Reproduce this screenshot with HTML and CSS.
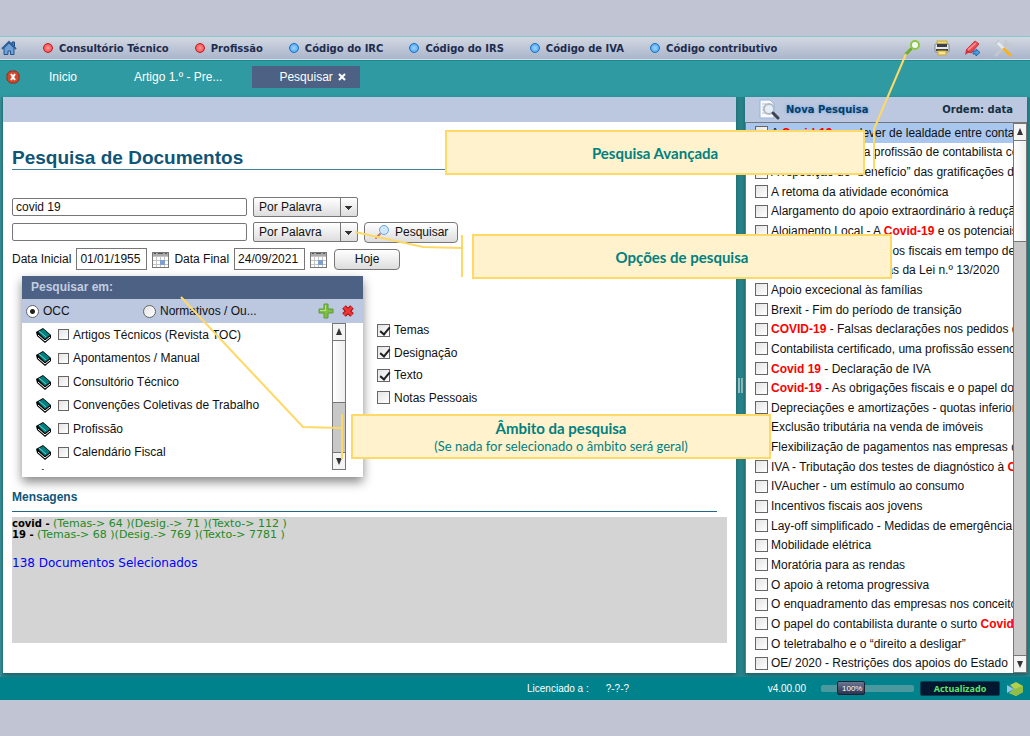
FILE: index.html
```html
<!DOCTYPE html>
<html lang="pt">
<head>
  <meta charset="UTF-8">
  <meta name="viewport" content="width=device-width, initial-scale=1.0">
  <title>Pesquisa de Documentos</title>
  <link rel="stylesheet" href="styles.css">
</head>
<body>

  <!-- Símbolos reutilizados -->
  <svg class="symbols" aria-hidden="true">
    <symbol id="book" viewBox="0 0 16 16">
      <path d="M0 5 L7 1 L15 8 V11 L9 16 L1 9 Z" fill="#000"/>
      <path d="M2 5 L7 2 L14 8 L9 12 Z" fill="#008080"/>
      <path d="M2 8 L9 14 L14 10" fill="none" stroke="#fff"/>
      <path d="M3 4 L10 10" stroke="#7cc" fill="none"/>
    </symbol>
    <symbol id="calendar" viewBox="0 0 17 17">
      <rect x="0.5" y="1.5" width="16" height="15" fill="#fff" stroke="#777"/>
      <rect x="1" y="2" width="15" height="3" fill="#aaa"/>
      <path d="M2 2.500h2M6 2.500h5M13 2.500h2" stroke="#555"/>
      <path d="M1 5.500h15M1 9.500h15M1 13.500h15M4.500 5v11M8.500 5v11M12.500 5v11" stroke="#c4c4c4"/>
      <rect x="8" y="9" width="5" height="5" fill="#7f9fcf"/>
    </symbol>
    <symbol id="up" viewBox="0 0 14 16"><path d="M7 4 L10 11 H4 Z" fill="#333"/></symbol>
    <symbol id="down" viewBox="0 0 14 16"><path d="M7 12 L10 5 H4 Z" fill="#333"/></symbol>
  </svg>

  <div class="app">

    <!-- Menu principal -->
    <nav class="menu">
      <a class="home" href="#" aria-label="Início">
        <svg width="16" height="16" viewBox="0 0 16 16">
          <path d="M11 2h2.500v5H11z" fill="#4d7fb8" stroke="#1f4b80"/>
          <path d="M3 8 L8 3 L13 8 V14.500 H9.500 V11 H7 V14.500 H3 Z" fill="#6ea0d6" stroke="#24548c"/>
          <path d="M1 9 L8 2 L15 9" fill="none" stroke="#2f609c" stroke-width="2"/>
        </svg>
      </a>
      <a class="menu-link red" href="#">Consultório Técnico</a>
      <a class="menu-link red" href="#">Profissão</a>
      <a class="menu-link blue" href="#">Código do IRC</a>
      <a class="menu-link blue" href="#">Código do IRS</a>
      <a class="menu-link blue" href="#">Código de IVA</a>
      <a class="menu-link blue" href="#">Código contributivo</a>
      <div class="tools">
        <button class="icon-button" aria-label="Pesquisa avançada">
          <svg width="18" height="18" viewBox="0 0 18 18">
            <path d="M3 15 L8 10" stroke="#6fae2c" stroke-width="3" stroke-linecap="round"/>
            <circle cx="12" cy="6" r="4" fill="#f4fbf4" stroke="#8cc63f" stroke-width="2"/>
          </svg>
        </button>
        <button class="icon-button" aria-label="Imprimir">
          <svg width="18" height="18" viewBox="0 0 18 18">
            <rect x="4" y="2" width="10" height="4" fill="#f2d860" stroke="#c9a83a"/>
            <rect x="2" y="5" width="14" height="8" rx="1" fill="#e4e7eb" stroke="#83888f"/>
            <rect x="4" y="5" width="10" height="3" fill="#3c4046"/>
            <path d="M3 11h12" stroke="#444" stroke-width="2"/>
            <rect x="5" y="12" width="8" height="4" fill="#fae487" stroke="#c9a83a"/>
          </svg>
        </button>
        <button class="icon-button" aria-label="Marcador">
          <svg width="18" height="18" viewBox="0 0 18 18">
            <path d="M3 11 L12 2 L16 5 L8 14 Z" fill="#e9454b" stroke="#c9353d"/>
            <path d="M5 11 L13 4" stroke="#f58a8d" stroke-width="2"/>
            <path d="M3 11 L2 16 L5 14 L8 14 Z" fill="#d22f38"/>
            <path d="M10 12h3V10l4 3.500-4 3.500V15h-3z" fill="#4b9be0" stroke="#2767a8"/>
          </svg>
        </button>
        <button class="icon-button" aria-label="Ferramentas">
          <svg width="20" height="18" viewBox="0 0 20 18">
            <path d="M3 16 L14 5" stroke="#c3c8ce" stroke-width="3" stroke-linecap="round"/>
            <path d="M13 1 L12 5 L15 7 L18 5" fill="none" stroke="#c3c8ce" stroke-width="2"/>
            <path d="M4 3 L11 10" stroke="#e6e8eb" stroke-width="3" stroke-linecap="round"/>
            <path d="M2 5 L6 1" stroke="#c3c8ce" stroke-width="2"/>
            <path d="M11 10 L17 16" stroke="#f5b41d" stroke-width="3" stroke-linecap="round"/>
          </svg>
        </button>
      </div>
    </nav>

    <!-- Separadores abertos -->
    <div class="tabs">
      <button class="close-all" aria-label="Fechar todos">
        <svg width="14" height="14" viewBox="0 0 14 14">
          <path d="M4 1h6l3 3v6l-3 3H4l-3-3V4z" fill="#cf4a2c" stroke="#8f2f20"/>
          <path d="M5 4 L9 10 M9 4 L5 10" stroke="#fff" stroke-width="2"/>
        </svg>
      </button>
      <button class="tab">Inicio</button>
      <button class="tab">Artigo 1.º - Pre...</button>
      <button class="tab active">Pesquisar
        <svg width="8" height="8" viewBox="0 0 8 8"><path d="M1 1 L7 7 M7 1 L1 7" stroke="#fff" stroke-width="2"/></svg>
      </button>
    </div>

    <div class="workspace">

      <!-- Painel de pesquisa -->
      <main class="search">
        <div class="panel-head"></div>
        <div class="search-body">
          <h1>Pesquisa de Documentos</h1>

          <form class="query">
            <div class="row">
              <input class="term" type="text" value="covid 19" aria-label="Primeiro termo">
              <select class="mode" aria-label="Modo do primeiro termo"><option>Por Palavra</option></select>
            </div>
            <div class="row">
              <input class="term" type="text" aria-label="Segundo termo">
              <select class="mode" aria-label="Modo do segundo termo"><option>Por Palavra</option></select>
              <button class="push find" type="button">
                <svg width="16" height="16" viewBox="0 0 16 16">
                  <path d="M2 14 L6 10" stroke="#c9775b" stroke-width="2" stroke-linecap="round"/>
                  <circle cx="10" cy="6" r="4.500" fill="#cfe8fb" stroke="#6fa5dc"/>
                </svg>
                Pesquisar
              </button>
            </div>
            <div class="row dates">
              <label for="from">Data Inicial</label>
              <input class="date" id="from" type="text" value="01/01/1955">
              <button class="icon-button" type="button" aria-label="Escolher data inicial"><svg width="17" height="17"><use href="#calendar"/></svg></button>
              <label for="to">Data Final</label>
              <input class="date" id="to" type="text" value="24/09/2021">
              <button class="icon-button" type="button" aria-label="Escolher data final"><svg width="17" height="17"><use href="#calendar"/></svg></button>
              <button class="push today" type="button">Hoje</button>
            </div>
          </form>

          <div class="filters">
            <section class="scope">
              <h2>Pesquisar em:</h2>
              <div class="scope-kind">
                <label class="occ"><input type="radio" name="kind" checked>OCC</label>
                <label class="norm"><input type="radio" name="kind">Normativos / Ou...</label>
                <button class="icon-button" aria-label="Adicionar">
                  <svg width="16" height="16" viewBox="0 0 16 16"><path d="M6 1h4v5h5v4h-5v5H6v-5H1V6h5z" fill="#7fbf42" stroke="#5f9a38"/><path d="M7.500 2v5M2 7.500h6" stroke="#b9e08c"/></svg>
                </button>
                <button class="icon-button" aria-label="Limpar">
                  <svg width="14" height="16" viewBox="0 0 14 16"><path d="M3 4 L11 12 M11 4 L3 12" stroke="#a01212" stroke-width="5"/><path d="M3 4 L11 12 M11 4 L3 12" stroke="#ee3535" stroke-width="3"/></svg>
                </button>
              </div>
              <div class="scope-list">
                <ul>
                  <li><svg width="16" height="16"><use href="#book"/></svg><label><input type="checkbox">Artigos Técnicos (Revista TOC)</label></li>
                  <li><svg width="16" height="16"><use href="#book"/></svg><label><input type="checkbox">Apontamentos / Manual</label></li>
                  <li><svg width="16" height="16"><use href="#book"/></svg><label><input type="checkbox">Consultório Técnico</label></li>
                  <li><svg width="16" height="16"><use href="#book"/></svg><label><input type="checkbox">Convenções Coletivas de Trabalho</label></li>
                  <li><svg width="16" height="16"><use href="#book"/></svg><label><input type="checkbox">Profissão</label></li>
                  <li><svg width="16" height="16"><use href="#book"/></svg><label><input type="checkbox">Calendário Fiscal</label></li>
                  <li class="next"><svg width="16" height="16"><use href="#book"/></svg></li>
                </ul>
                <div class="scrollbar">
                  <button aria-label="Subir"><svg width="14" height="16"><use href="#up"/></svg></button>
                  <div class="thumb scope-thumb"></div>
                  <div class="track"></div>
                  <button aria-label="Descer"><svg width="14" height="16"><use href="#down"/></svg></button>
                </div>
              </div>
            </section>

            <div class="fields">
              <label><input type="checkbox" checked>Temas</label>
              <label><input type="checkbox" checked>Designação</label>
              <label><input type="checkbox" checked>Texto</label>
              <label><input type="checkbox">Notas Pessoais</label>
            </div>
          </div>

          <h3>Mensagens</h3>
          <div class="messages">
            <p><b>covid - </b>(Temas-&gt; 64 )(Desig.-&gt; 71 )(Texto-&gt; 112 )</p>
            <p><b>19 - </b>(Temas-&gt; 68 )(Desig.-&gt; 769 )(Texto-&gt; 7781 )</p>
            <p class="total">138 Documentos Selecionados</p>
          </div>
        </div>
      </main>

      <div class="splitter"><span class="grip"></span></div>

      <!-- Resultados -->
      <aside class="results">
        <div class="panel-head">
          <svg width="24" height="24" viewBox="0 0 24 24">
            <path d="M3 2h10l4 4v14H3z" fill="#f8fafc" stroke="#8fb8e6"/>
            <path d="M5 6h5M5 9h3M5 12h3M5 15h4" stroke="#b9c0c8"/>
            <circle cx="12" cy="11" r="5" fill="#e4eef7" stroke="#b3bac3" stroke-width="2"/>
            <path d="M16 15 L21 20" stroke="#3d4350" stroke-width="3" stroke-linecap="round"/>
          </svg>
          <a class="new" href="#">Nova Pesquisa</a>
          <a class="order" href="#">Ordem: data</a>
        </div>
        <div class="results-list">
          <ul>
            <li class="selected"><label><input type="checkbox"><span>A <b>Covid-19</b> e o dever de lealdade entre contabil</span></label></li>
            <li><label><input type="checkbox"><span>A regularização da profissão de contabilista ce</span></label></li>
            <li><label><input type="checkbox"><span>A reposição do “benefício” das gratificações de</span></label></li>
            <li><label><input type="checkbox"><span>A retoma da atividade económica</span></label></li>
            <li><label><input type="checkbox"><span>Alargamento do apoio extraordinário à redução</span></label></li>
            <li><label><input type="checkbox"><span>Alojamento Local - A <b>Covid-19</b> e os potenciais i</span></label></li>
            <li><label><input type="checkbox"><span>Alterações: os benefícios fiscais em tempo de</span></label></li>
            <li><label><input type="checkbox"><span>Alterações nas medidas da Lei n.º 13/2020</span></label></li>
            <li><label><input type="checkbox"><span>Apoio excecional às famílias</span></label></li>
            <li><label><input type="checkbox"><span>Brexit - Fim do período de transição</span></label></li>
            <li><label><input type="checkbox"><span><b>COVID-19</b> - Falsas declarações nos pedidos de</span></label></li>
            <li><label><input type="checkbox"><span>Contabilista certificado, uma profissão essenci</span></label></li>
            <li><label><input type="checkbox"><span><b>Covid 19</b> - Declaração de IVA</span></label></li>
            <li><label><input type="checkbox"><span><b>Covid-19</b> - As obrigações fiscais e o papel do c</span></label></li>
            <li><label><input type="checkbox"><span>Depreciações e amortizações - quotas inferiore</span></label></li>
            <li><label><input type="checkbox"><span>Exclusão tributária na venda de imóveis</span></label></li>
            <li><label><input type="checkbox"><span>Flexibilização de pagamentos nas empresas d</span></label></li>
            <li><label><input type="checkbox"><span>IVA - Tributação dos testes de diagnóstico à <b>Co</b></span></label></li>
            <li><label><input type="checkbox"><span>IVAucher - um estímulo ao consumo</span></label></li>
            <li><label><input type="checkbox"><span>Incentivos fiscais aos jovens</span></label></li>
            <li><label><input type="checkbox"><span>Lay-off simplificado - Medidas de emergência</span></label></li>
            <li><label><input type="checkbox"><span>Mobilidade elétrica</span></label></li>
            <li><label><input type="checkbox"><span>Moratória para as rendas</span></label></li>
            <li><label><input type="checkbox"><span>O apoio à retoma progressiva</span></label></li>
            <li><label><input type="checkbox"><span>O enquadramento das empresas nos conceito</span></label></li>
            <li><label><input type="checkbox"><span>O papel do contabilista durante o surto <b>Covid-1</b></span></label></li>
            <li><label><input type="checkbox"><span>O teletrabalho e o “direito a desligar”</span></label></li>
            <li><label><input type="checkbox"><span>OE/ 2020 - Restrições dos apoios do Estado</span></label></li>
          </ul>
          <div class="scrollbar">
            <button aria-label="Subir"><svg width="14" height="16"><use href="#up"/></svg></button>
            <div class="thumb results-thumb"></div>
            <div class="track"></div>
            <button aria-label="Descer"><svg width="14" height="16"><use href="#down"/></svg></button>
          </div>
        </div>
      </aside>
    </div>

    <!-- Barra de estado -->
    <footer class="status">
      <span>Licenciado a :</span>
      <span class="licence">?-?-?</span>
      <span class="version">v4.00.00</span>
      <div class="zoom">
        <input type="range" id="zoom" min="50" max="200" value="88" aria-label="Zoom">
        <label for="zoom">100%</label>
      </div>
      <button class="updated">Actualizado</button>
      <svg width="16" height="16" viewBox="0 0 16 16">
        <path d="M3 4 L9 1 L16 5 V11 L9 15 L2 12 L7 8 Z" fill="#b4cf48"/>
        <path d="M7 8 L16 5 V11 L9 15 L2 12 Z" fill="#8fbd45"/>
        <path d="M0 4 L7 8 L0 12 Z" fill="#8cc4ea"/>
      </svg>
    </footer>

    <!-- Anotações sobrepostas -->
    <svg class="leaders" width="1030" height="736" viewBox="0 0 1030 736" aria-hidden="true">
      <path d="M906 54 L874 129 V171"/>
      <path d="M355 232 L423 247 L462 248 M462 235 V277"/>
      <path d="M181 297 L303 427 L342 428 M342 414 V459"/>
    </svg>
    <div class="callout advanced"><strong>Pesquisa Avançada</strong></div>
    <div class="callout options"><strong>Opções de pesquisa</strong></div>
    <div class="callout ambit"><strong>Âmbito da pesquisa</strong><span>(Se nada for selecionado o âmbito será geral)</span></div>
  </div>

</body>
</html>
```
FILE: styles.css
```css
/* ====== BASE ====== */
* {
  box-sizing: border-box;
}
body {
  margin: 0;
  background: #c0c4d3;
  color: #111;
  font-family: "Liberation Sans", Arial, sans-serif;
  font-size: 12px;
}
h1, h2, h3, p, ul {
  margin: 0;
  padding: 0;
}
ul {
  list-style: none;
}
svg {
  display: block;
  flex: none;
}
.symbols {
  position: absolute;
  width: 0;
  height: 0;
}
button, input, select {
  font: inherit;
  color: inherit;
  margin: 0;
}
.icon-button, .close-all {
  display: block;
  border: 0;
  padding: 0;
  background: none;
}
.app {
  position: relative;
  display: flex;
  flex-direction: column;
  min-height: 100vh;
  padding: 36px 0;
  overflow: hidden;
}

/* ====== MENU ====== */
.menu {
  display: flex;
  align-items: center;
  gap: 26px;
  height: 24px;
  padding: 0 17px 0 1px;
  border-top: 1px solid #8cc6cd;
  border-bottom: 1px solid #d5d9e3;
  background: linear-gradient(#d3d8e2, #a9b5cb);
  font: bold 10px "DejaVu Sans", Verdana, sans-serif;
}
.menu-link {
  display: flex;
  align-items: center;
  gap: 6px;
  color: #1d2b4d;
  text-decoration: none;
  white-space: nowrap;
}
.menu-link::before {
  content: "";
  width: 8px;
  height: 8px;
  border-radius: 50%;
}
.red::before {
  border: 1px solid #c31d1d;
  background: radial-gradient(#ff9c9c, #ee3333);
}
.blue::before {
  border: 1px solid #1b6fc0;
  background: radial-gradient(#9fd6ff, #3c9cee);
}
.tools {
  display: flex;
  gap: 12px;
  margin-left: auto;
}

/* ====== SEPARADORES ====== */
.tabs {
  display: flex;
  align-items: center;
  height: 37px;
  padding: 0 6px 5px;
  border-top: 1px solid #178a92;
  background: #2f9aa2;
}
.tab {
  height: 22px;
  border: 0;
  padding: 0 30px 0 27px;
  background: none;
  color: #fff;
}
.close-all {
  margin-right: 2px;
}
.tab.active {
  display: flex;
  align-items: center;
  gap: 5px;
  padding-right: 14px;
  background: #4c6184;
}

/* ====== ÁREA DE TRABALHO ====== */
.workspace {
  display: flex;
  flex: 1;
  padding: 0 3px 4px;
  background: linear-gradient(90deg, #3c9298, #28838a 3px);
}
.panel-head {
  display: flex;
  align-items: center;
  height: 25px;
  background: #bcc7e0;
}
.search {
  flex: 1;
  min-width: 0;
  background: #fff;
  box-shadow: 0 2px 4px #1c6066;
}
.search-body {
  padding: 24px 9px 0;
}
h1 {
  margin-right: 10px;
  border-bottom: 1px solid #3f8194;
  color: #0f5578;
  font-size: 19px;
  line-height: 23px;
}
.query {
  display: flex;
  flex-direction: column;
  gap: 5px;
  margin-top: 27px;
}
.row {
  display: flex;
  align-items: center;
  gap: 6px;
  height: 20px;
}
.term, .date {
  border: 1px solid #777;
  padding: 0 3px;
  background: #fff;
}
.term {
  width: 235px;
  height: 18px;
  border-radius: 2px;
}
.date {
  width: 71px;
  height: 22px;
}
.mode {
  appearance: none;
  width: 105px;
  height: 20px;
  border: 1px solid #777;
  border-radius: 2px;
  padding: 0 5px;
  background:
    linear-gradient(#333, #333) 91px 8px / 7px 1px no-repeat,
    linear-gradient(#333, #333) 92px 9px / 5px 1px no-repeat,
    linear-gradient(#333, #333) 93px 10px / 3px 1px no-repeat,
    linear-gradient(#333, #333) 94px 11px / 1px 1px no-repeat,
    linear-gradient(#777, #777) 86px 0 / 1px 20px no-repeat,
    linear-gradient(#fff, #ddd);
}
.push {
  display: flex;
  align-items: center;
  justify-content: center;
  gap: 5px;
  height: 21px;
  border: 1px solid #777;
  border-radius: 4px;
  padding: 0 9px;
  background: linear-gradient(#fff, #ddd);
}
.dates {
  gap: 5px;
  height: 22px;
  margin-top: 1px;
}
.today {
  width: 66px;
  margin-left: 2px;
}

/* ====== FILTROS ====== */
.filters {
  display: flex;
  gap: 14px;
  margin: 6px 0 0 10px;
}
.scope {
  width: 341px;
  background: #fff;
  box-shadow: 0 5px 10px #888;
}
h2 {
  height: 23px;
  padding-left: 9px;
  background: #4c6184;
  color: #c3cde0;
  font-size: 12px;
  line-height: 22px;
}
.scope-kind {
  display: flex;
  align-items: center;
  gap: 7px;
  height: 24px;
  padding: 0 8px 0 4px;
  background: #bcc7e0;
}
.scope-kind label {
  display: flex;
  align-items: center;
  gap: 4px;
}
.occ {
  width: 110px;
}
.norm {
  flex: 1;
}
input[type="radio"], input[type="checkbox"] {
  appearance: none;
  flex: none;
  width: 13px;
  height: 13px;
  border: 1px solid #666;
  background: linear-gradient(135deg, #e4e4e4, #fff);
}
input[type="radio"] {
  border-radius: 50%;
}
input[type="radio"]:checked {
  background: radial-gradient(#222 0 2px, #fff 3px);
}
.scope-list {
  display: flex;
  height: 154px;
  padding: 0 17px 7px 14px;
}
.scope-list ul {
  display: grid;
  grid-template-rows: repeat(6, 1fr) 6px;
  flex: 1;
}
.scope-list li, .scope-list label {
  display: flex;
  align-items: center;
}
.scope-list li {
  gap: 6px;
}
.scope-list .next {
  align-items: flex-start;
  padding-top: 4px;
  overflow: hidden;
}
.scope-list label {
  gap: 4px;
}
.scope-list input[type="checkbox"] {
  width: 11px;
  height: 11px;
}
.scrollbar {
  display: flex;
  flex-direction: column;
  flex: none;
  width: 14px;
  border: 1px solid #777;
}
.scrollbar button {
  display: flex;
  justify-content: center;
  height: 16px;
  border: 0;
  padding: 0;
  background: #f4f4f4;
}
.thumb {
  border: solid #777;
  border-width: 1px 0;
  background: linear-gradient(90deg, #fff, #eee);
}
.scope-thumb {
  height: 63px;
}
.results-thumb {
  height: 102px;
}
.track {
  flex: 1;
  border-bottom: 1px solid #777;
  background: #c8c8c8;
}
.fields {
  display: grid;
  grid-auto-rows: 1fr;
  height: 90px;
  margin-top: 43px;
}
.fields label {
  display: flex;
  align-items: center;
  gap: 4px;
}
.fields input:checked::after {
  content: "";
  display: block;
  width: 4px;
  height: 8px;
  margin: 0 0 0 4px;
  border: solid #222;
  border-width: 0 2px 2px 0;
  transform: rotate(40deg);
}

/* ====== MENSAGENS ====== */
h3 {
  margin: 13px 10px 0 0;
  padding-bottom: 6px;
  border-bottom: 1px solid #1d6a8c;
  color: #0f5578;
  font-size: 12px;
  line-height: 15px;
}
.messages {
  height: 126px;
  margin-top: 5px;
  padding-top: 1px;
  background: #d4d4d4;
  color: #228b22;
  font: 11px/11px "DejaVu Sans", Verdana, sans-serif;
}
.messages b {
  color: #000;
  font-size: 10px;
}
.messages .total {
  margin-top: 15px;
  color: #00f;
  font-size: 12px;
  line-height: 16px;
}

/* ====== RESULTADOS ====== */
.splitter {
  display: flex;
  align-items: center;
  justify-content: center;
  width: 9px;
}
.grip {
  width: 5px;
  height: 15px;
  border: solid #9bb;
  border-width: 0 2px;
}
.results {
  display: flex;
  flex-direction: column;
  width: 282px;
  background: #fff;
  box-shadow: 0 2px 4px #1c6066;
}
.results .panel-head {
  padding: 0 14px 0 12px;
  font: bold 10px "DejaVu Sans", Verdana, sans-serif;
}
.results .panel-head a {
  color: #16303f;
  text-decoration: none;
}
.results .panel-head .new {
  margin-left: 5px;
  color: #0d3c63;
  text-shadow: 0 0 3px #4fa4ee;
}
.results .panel-head .order {
  margin-left: auto;
}
.results-list {
  display: flex;
  flex: 1;
  border: solid #777;
  border-width: 1px 0 0 1px;
}
.results-list ul {
  display: grid;
  grid-auto-rows: 1fr;
  flex: 1;
  min-width: 0;
}
.results-list li {
  display: flex;
  align-items: center;
  overflow: hidden;
  padding-left: 9px;
  white-space: nowrap;
}
.results-list label {
  display: flex;
  align-items: center;
  gap: 3px;
}
.results-list b {
  color: #f00;
}
.results-list .selected {
  background: #a8c6ee;
}

/* ====== ESTADO ====== */
.status {
  display: flex;
  align-items: center;
  height: 23px;
  padding: 0 7px 0 527px;
  background: #00828c;
  color: #fff;
  font-size: 10px;
}
.licence {
  margin-left: 17px;
}
.version {
  margin-left: auto;
}
.zoom {
  position: relative;
  width: 93px;
  height: 14px;
  margin: 0 6px 0 15px;
}
.zoom input {
  appearance: none;
  display: block;
  width: 100%;
  height: 7px;
  margin-top: 3px;
  border-radius: 2px;
  background: #4b999f;
}
.zoom input::-webkit-slider-thumb {
  appearance: none;
  width: 28px;
  height: 14px;
  border: 1px solid #1b2137;
  border-radius: 2px;
  background: linear-gradient(#6d7590, #2b3350);
}
.zoom label {
  position: absolute;
  left: 21px;
  top: 2px;
  font-size: 8px;
  line-height: 9px;
  pointer-events: none;
}
.updated {
  width: 80px;
  height: 15px;
  margin-right: 7px;
  border: 1px solid #0a3f52;
  border-radius: 2px;
  padding: 0;
  background: #041730;
  color: #5fe36a;
  font: bold 9px "Noto Sans", Tahoma, sans-serif;
}

/* ====== ANOTAÇÕES ====== */
.leaders {
  position: absolute;
  left: 0;
  top: 0;
  fill: none;
  stroke: #ffd966;
  stroke-width: 2;
  pointer-events: none;
}
.callout {
  position: absolute;
  display: flex;
  flex-direction: column;
  align-items: center;
  justify-content: center;
  width: 420px;
  height: 45px;
  border: 2px solid #ffd966;
  background: #fff2cc;
  color: #008080;
  font: 13px/18px Lato, Calibri, sans-serif;
}
.callout strong {
  font-size: 15px;
}
.advanced {
  left: 445px;
  top: 130px;
}
.options {
  left: 472px;
  top: 234px;
}
.ambit {
  left: 351px;
  top: 414px;
}
```
